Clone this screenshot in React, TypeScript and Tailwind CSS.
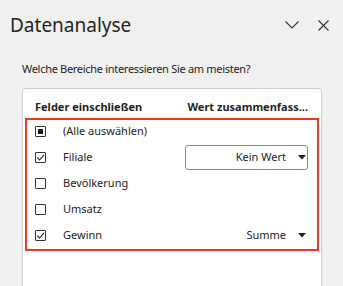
import React from 'react';

function Check({ state }: { state: 'none' | 'checked' | 'mixed' }) {
  return (
    <div className="w-[11px] h-[11px] border border-[#333] rounded-[1px] flex items-center justify-center shrink-0">
      {state === 'mixed' && <div className="w-[5px] h-[5px] bg-[#1a1a1a]" />}
      {state === 'checked' && (
        <svg width="9" height="9" viewBox="0 0 9 9" fill="none">
          <path d="M1.2 4.6 L3.6 7 L8 1.8" stroke="#222" strokeWidth="1.1" />
        </svg>
      )}
    </div>
  );
}

function Caret() {
  return (
    <svg width="8" height="5" viewBox="0 0 8 5">
      <path d="M0 0 H8 L4 4.5 Z" fill="#222" />
    </svg>
  );
}

const rows: { label: string; state: 'none' | 'checked' | 'mixed'; value?: string; boxed?: boolean }[] = [
  { label: '(Alle auswählen)', state: 'mixed' },
  { label: 'Filiale', state: 'checked', value: 'Kein Wert', boxed: true },
  { label: 'Bevölkerung', state: 'none' },
  { label: 'Umsatz', state: 'none' },
  { label: 'Gewinn', state: 'checked', value: 'Summe' },
];

export default function App() {
  return (
    <div
      className="w-[343px] h-[286px] bg-[#f0f0f0] overflow-hidden text-[#242424]"
      style={{ fontFamily: '"Noto Sans", "Open Sans", sans-serif' }}
    >
      {/* Kopfzeile */}
      <div className="flex items-center h-[50px] pl-[10px] pr-[14px]">
        <h1 className="text-[19px] leading-[26px] flex-1">Datenanalyse</h1>
        <svg width="14" height="8" viewBox="0 0 14 8" fill="none" className="mr-[19px]">
          <path d="M0.5 0.5 L7 7 L13.5 0.5" stroke="#333" strokeWidth="1.1" />
        </svg>
        <svg width="11" height="11" viewBox="0 0 11 11" fill="none">
          <path d="M0.5 0.5 L10.5 10.5 M10.5 0.5 L0.5 10.5" stroke="#333" strokeWidth="1.1" />
        </svg>
      </div>

      <p className="pl-[22px] pt-[11px] text-[11px] leading-[16px] tracking-[-0.3px]">
        Welche Bereiche interessieren Sie am meisten?
      </p>

      {/* Feldliste */}
      <div className="ml-[22px] w-[300px] h-[220px] mt-[11px] bg-white border border-[#cfcfcf] rounded-[3px]">
        <div className="flex justify-between pl-[12px] pr-[13px] pt-[10px] pb-[3px] text-[11px] leading-[16px] font-bold">
          <span>Felder einschließen</span>
          <span>Wert zusammenfass...</span>
        </div>
        <div className="mx-[2px] border-2 border-[#ea3a1e] pb-[1px]">
          <div className="-mt-[2px]">
            {rows.map((r) => (
              <div key={r.label} className="h-[26px] flex items-center pl-[8px] pr-[9px] text-[11px]">
                <Check state={r.state} />
                <span className="ml-[17px] flex-1">{r.label}</span>
                {r.value && (
                  <div
                    className={
                      r.boxed
                        ? 'w-[123px] h-[25px] border border-[#8a8a8a] rounded-[3px] flex items-center justify-end pr-[1px] gap-[12px]'
                        : 'flex items-center justify-end pr-[2px] gap-[12px]'
                    }
                  >
                    <span>{r.value}</span>
                    <Caret />
                  </div>
                )}
              </div>
            ))}
          </div>
        </div>
      </div>
    </div>
  );
}
